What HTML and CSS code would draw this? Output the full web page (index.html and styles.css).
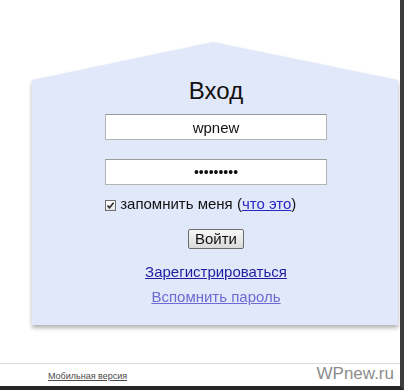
FILE: index.html
```html
<!DOCTYPE html>
<html lang="ru">
<head>
<meta charset="utf-8">
<title>Вход</title>
<link rel="stylesheet" href="styles.css">
</head>
<body>
<div class="frame">
  <main class="stage">
    <div class="house-shadow">
      <section class="house">
        <h1 class="title">Вход</h1>
        <input class="field" type="text" value="wpnew">
        <input class="field field-pass" type="password" value="123456789">
        <label class="remember"><span class="check"><svg width="9" height="9" viewBox="0 0 9 9"><path d="M1.5 4.5 L3.5 6.8 L7.6 1.8" fill="none" stroke="#222" stroke-width="1.4"/></svg></span> запомнить меня (<a class="link" href="#">что это</a>)</label>
        <button class="btn" type="button">Войти</button>
        <a class="link register" href="#">Зарегистрироваться</a>
        <a class="link recall" href="#">Вспомнить пароль</a>
      </section>
    </div>
  </main>
  <footer class="footer">
    <a class="mobile" href="#">Мобильная версия</a>
    <span class="brand">WPnew.ru</span>
  </footer>
</div>
</body>
</html>
```

FILE: styles.css
```css
html, body {
  margin: 0;
  padding: 0;
  background: #fff;
}

body {
  font-family: "Liberation Sans", Arial, sans-serif;
  color: #111;
}

.frame {
  width: 400px;
  height: 386px;
  border-right: 4px solid #3c3c3c;
  border-bottom: 4px solid #262626;
  display: flex;
  flex-direction: column;
  overflow: hidden;
}

.stage {
  flex: 1;
  padding: 42px 2px 0 32px;
}

.house-shadow {
  filter: drop-shadow(0 3px 2px rgba(0, 0, 0, 0.3));
}

.house {
  height: 283px;
  background: #e1e8f9;
  clip-path: polygon(0 38px, 181px 0, 100% 38px, 100% 100%, 0 100%);
  display: flex;
  flex-direction: column;
  align-items: center;
  padding: 35px 0 0 2px;
  box-sizing: border-box;
}

.title {
  margin: 0;
  font-size: 24px;
  line-height: 28px;
  font-weight: normal;
  color: #111;
}

.field {
  margin: 9px 0 0;
  width: 222px;
  height: 26px;
  box-sizing: border-box;
  border: 1px solid #b4b4b4;
  border-top-color: #9a9a9a;
  background: #fff;
  font-family: "Liberation Sans", Arial, sans-serif;
  font-size: 15px;
  text-align: center;
  color: #111;
  padding: 0 4px;
  outline: none;
}

.field-pass {
  margin-top: 19px;
  font-size: 14px;
}

.remember {
  margin-top: 10px;
  align-self: flex-start;
  margin-left: 71px;
  display: block;
  font-size: 15px;
  line-height: 18px;
  white-space: nowrap;
}

.check {
  display: inline-flex;
  vertical-align: -1px;
  width: 11px;
  height: 11px;
  box-sizing: border-box;
  border: 1px solid #6e6e6e;
  background: linear-gradient(#fdfdfd, #e6e6e6);
  align-items: center;
  justify-content: center;
}

.check svg {
  display: block;
}

.link {
  color: #2727c4;
  text-decoration: underline;
}

.btn {
  margin-top: 16px;
  width: 56px;
  height: 20px;
  padding: 0;
  border: 1px solid #6c6c6c;
  border-radius: 2px;
  background: linear-gradient(#f7f7f7, #dadada);
  font-family: "Liberation Sans", Arial, sans-serif;
  font-size: 15px;
  line-height: 18px;
  color: #111;
}

.register {
  margin-top: 14px;
  font-size: 15px;
  line-height: 18px;
  color: #1e1ea2;
}

.recall {
  margin-top: 7px;
  font-size: 15px;
  line-height: 18px;
  color: #6b6bd4;
}

.footer {
  height: 23px;
  border-top: 1px solid #dcdcdc;
  display: flex;
  align-items: flex-end;
  padding-bottom: 2px;
  box-sizing: border-box;
}

.mobile {
  margin-left: 48px;
  margin-bottom: 3px;
  font-size: 9px;
  color: #4a4a4a;
  text-decoration: underline;
}

.brand {
  margin-left: auto;
  margin-right: 6px;
  font-size: 17px;
  line-height: 20px;
  color: #8c8c8c;
}
```
